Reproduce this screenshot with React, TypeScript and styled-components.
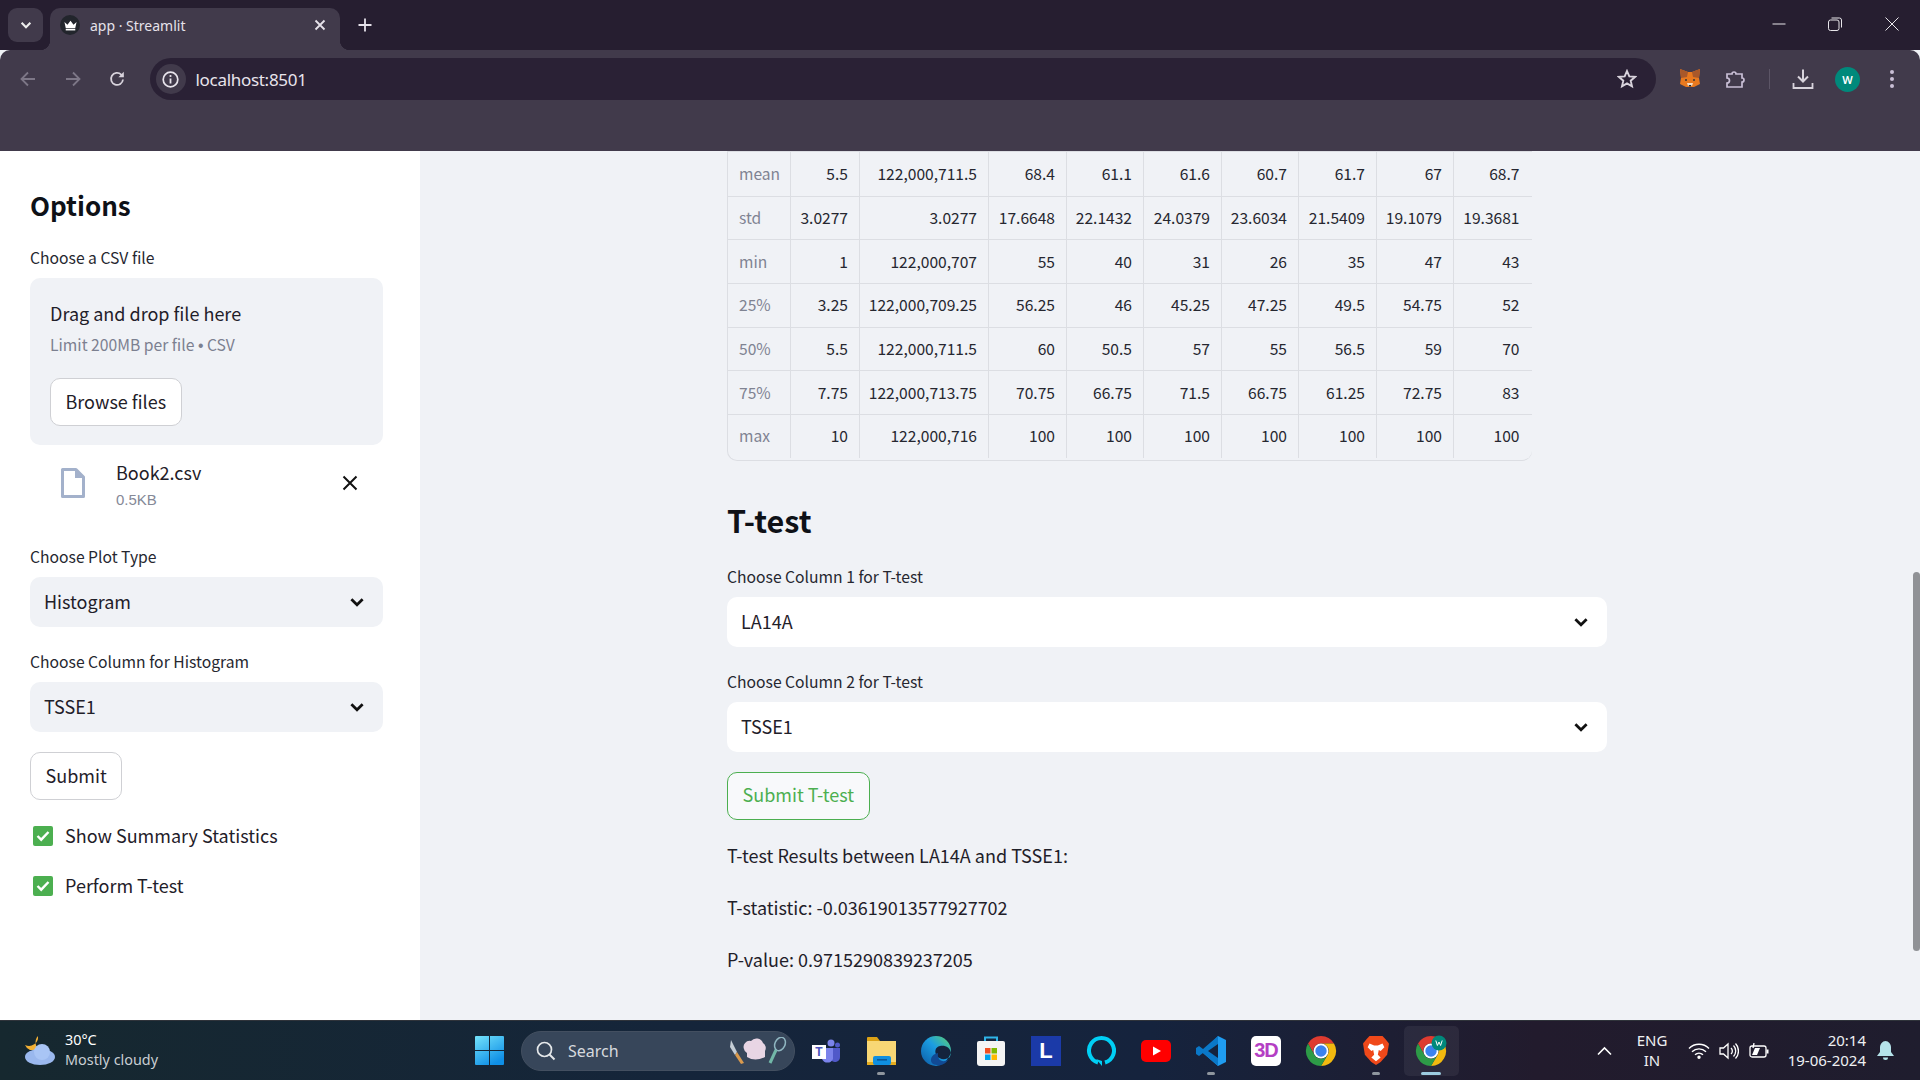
import React from 'react';
import styled, { createGlobalStyle } from 'styled-components';

const appFont = `"Noto Sans CJK SC", "Noto Sans", sans-serif`;
const chromeFont = `"Noto Sans", "Open Sans", sans-serif`;

const GlobalStyle = createGlobalStyle`
  html, body {
    margin: 0;
    padding: 0;
    height: 100%;
    overflow: hidden;
    background: #f0f2f6;
  }
  * { box-sizing: border-box; }
`;

const Shell = styled.div`
  width: 1920px;
  height: 1080px;
  display: flex;
  flex-direction: column;
  overflow: hidden;
  position: relative;
`;

/* browser chrome */
const TabStrip = styled.div`
  height: 50px;
  flex: none;
  background: #261e30;
  display: flex;
  align-items: flex-end;
  padding-left: 8px;
  font-family: ${chromeFont};
`;

const TabMenu = styled.div`
  width: 35px;
  height: 34px;
  margin: 0 7px 8px 0;
  background: #413a4b;
  border-radius: 9px;
  display: flex;
  align-items: center;
  justify-content: center;
`;

const Tab = styled.div`
  width: 290px;
  height: 42px;
  background: #413a4b;
  border-radius: 10px 10px 0 0;
  display: flex;
  align-items: center;
  padding: 0 14px 8px 10px;
  color: #e6e2ea;
  font-size: 14px;
  position: relative;
  &::before, &::after {
    content: '';
    position: absolute;
    bottom: 0;
    width: 10px;
    height: 10px;
  }
  &::before {
    left: -10px;
    background: radial-gradient(circle at 0 0, #261e30 10px, #413a4b 10.5px);
  }
  &::after {
    right: -10px;
    background: radial-gradient(circle at 100% 0, #261e30 10px, #413a4b 10.5px);
  }
`;

const Favicon = styled.div`
  width: 20px;
  height: 20px;
  border-radius: 50%;
  background: #22252c;
  display: flex;
  align-items: center;
  justify-content: center;
  margin-right: 10px;
`;

const TabTitle = styled.span`
  flex: 1;
`;

const NewTab = styled.div`
  width: 30px;
  height: 30px;
  margin: 0 0 10px 10px;
  display: flex;
  align-items: center;
  justify-content: center;
`;

const WindowControls = styled.div`
  margin-left: auto;
  height: 50px;
  display: flex;
  align-items: center;
  padding-bottom: 2px;
`;

const WindowButton = styled.div`
  width: 56.5px;
  display: flex;
  justify-content: center;
`;

const Toolbar = styled.div`
  height: 101px;
  flex: none;
  background: #413a4b;
  border-radius: 10px 10px 0 0;
  display: flex;
  align-items: flex-start;
  padding: 8px 0 0 10px;
  font-family: ${chromeFont};
`;

const NavButton = styled.div`
  width: 36px;
  height: 42px;
  margin-right: 8.5px;
  display: flex;
  align-items: center;
  justify-content: center;
`;

const AddressBar = styled.div`
  width: 1506px;
  height: 42px;
  margin-left: 6px;
  border-radius: 21px;
  background: #2a2135;
  display: flex;
  align-items: center;
  padding: 0 19px 0 6px;
  color: #e8e4ec;
`;

const InfoBadge = styled.div`
  width: 30px;
  height: 30px;
  border-radius: 50%;
  background: #413a4b;
  display: flex;
  align-items: center;
  justify-content: center;
  margin-right: 10px;
`;

const Url = styled.span`
  flex: 1;
  font-size: 17px;
  letter-spacing: -0.3px;
`;

const ToolIcons = styled.div`
  display: flex;
  align-items: center;
  height: 42px;
`;

const ToolIcon = styled.div<{ $w: number }>`
  width: ${(p) => p.$w}px;
  display: flex;
  justify-content: center;
  align-items: center;
`;

const ToolDivider = styled.div`
  width: 1px;
  height: 20px;
  background: #5c5566;
  margin: 0 13px 0 21px;
`;

const Avatar = styled.div`
  width: 25px;
  height: 25px;
  border-radius: 50%;
  background: #00897b;
  color: #fff;
  font-size: 11px;
  font-weight: 600;
  display: flex;
  align-items: center;
  justify-content: center;
`;

/* streamlit page */
const Page = styled.div`
  flex: 1;
  min-height: 0;
  display: flex;
  font-family: ${appFont};
  color: #1f2029;
`;

const Sidebar = styled.aside`
  width: 420px;
  flex: none;
  background: #fff;
  padding: 35px 37px 0 30px;
`;

const SideTitle = styled.h2`
  margin: 0 0 23px;
  font-size: 26px;
  line-height: 38px;
  font-weight: 600;
  color: #0e1117;
`;

const Field = styled.div<{ $gap?: number }>`
  margin-bottom: ${(p) => p.$gap ?? 24}px;
`;

const Label = styled.div`
  font-size: 15.7px;
  line-height: 22px;
  margin-bottom: 9px;
  color: #262730;
`;

const Uploader = styled.div`
  height: 167px;
  background: #f0f2f6;
  border-radius: 10px;
  padding: 20px;
`;

const DropTitle = styled.div`
  font-size: 18px;
  line-height: 30px;
`;

const DropHint = styled.div`
  margin: 6px 0 21px;
  font-size: 15.7px;
  line-height: 22px;
  color: #7c8090;
`;

const Dot = styled.span`
  font-family: "Liberation Sans", sans-serif;
`;

const Button = styled.div<{ $accent?: boolean }>`
  display: inline-flex;
  align-items: center;
  height: 48px;
  padding: 0 14.5px 3px;
  font-size: 18px;
  border-radius: 10px;
  background: ${(p) => (p.$accent ? '#f8f9fb' : '#fff')};
  border: 1px solid ${(p) => (p.$accent ? '#4caf50' : '#cfd0d4')};
  color: ${(p) => (p.$accent ? '#4caf50' : '#1f2029')};
`;

const FileRow = styled.div`
  height: 50px;
  margin: 13px 0 38px;
  padding: 0 25px 0 31px;
  display: flex;
  align-items: center;
`;

const FileInfo = styled.div`
  flex: 1;
  margin: 5px 0 0 31px;
`;

const FileName = styled.div`
  font-size: 18px;
  line-height: 27px;
`;

const FileSize = styled.div`
  font-family: "Liberation Sans", sans-serif;
  font-size: 15px;
  line-height: 27px;
  color: #858997;
`;

const Select = styled.div<{ $light?: boolean }>`
  height: 50px;
  border-radius: 10px;
  background: ${(p) => (p.$light ? '#fff' : '#f0f2f6')};
  padding: 0 17px 0 14px;
  display: flex;
  align-items: center;
  justify-content: space-between;
  font-size: 18px;
`;

const SelectValue = styled.span`
  padding-bottom: 2px;
`;

const CheckRow = styled.div`
  height: 28px;
  margin-top: 22px;
  padding-left: 3px;
  display: flex;
  align-items: center;
  gap: 12px;
  font-size: 18px;
`;

const CheckText = styled.span`
  padding-bottom: 2px;
`;

const CheckBox = styled.div`
  width: 20px;
  height: 20px;
  border-radius: 2px;
  background: #4caf50;
  display: flex;
  align-items: center;
  justify-content: center;
`;

const Main = styled.main`
  flex: 1;
  padding-left: 307px;
  background: #f0f2f6;
`;

const StatsTable = styled.div`
  width: 805px;
  border-left: 1px solid #dcdee3;
  border-bottom: 1px solid #dcdee3;
  border-top: 1px solid #dcdee3;
  border-radius: 0 0 10px 10px;
  overflow: hidden;
  padding-bottom: 2px;
  font-size: 15.6px;
`;

const StatsRow = styled.div`
  display: grid;
  grid-template-columns: 63px 69px 129px 78px 77px 78px 77px 78px 77px 78px;
  height: 43.7px;
  & + & { border-top: 1.5px solid #dcdee3; }
`;

const Cell = styled.div<{ $head?: boolean }>`
  display: flex;
  align-items: center;
  justify-content: ${(p) => (p.$head ? 'flex-start' : 'flex-end')};
  padding: 0 ${(p) => (p.$head ? '0' : '11px')} 2px 11px;
  color: ${(p) => (p.$head ? '#7f8392' : '#262730')};
  border-right: 1px solid #dcdee3;
  &:last-child {
    border-right: none;
    padding-right: 12.5px;
  }
`;

const SectionTitle = styled.h2`
  margin: 37px 0 24px;
  font-size: 30.5px;
  line-height: 44px;
  font-weight: 600;
  color: #0e1117;
`;

const MainField = styled(Field)`
  width: 880px;
`;

const Result = styled.p`
  margin: 27px 0 0;
  font-size: 18px;
  line-height: 25px;
  &:first-of-type { margin-top: 23px; }
`;

const ScrollThumb = styled.div`
  position: absolute;
  right: 0;
  top: 572px;
  width: 7px;
  height: 379px;
  background: #909296;
  border-radius: 4px;
`;

/* windows taskbar */
const Taskbar = styled.footer`
  height: 60px;
  flex: none;
  border-top: 1px solid #2f333a;
  background: linear-gradient(90deg, #16282f 0%, #15253a 35%, #15233d 60%, #221b2d 80%, #1f1d2e 100%);
  display: flex;
  align-items: center;
  color: #eef0f2;
  font-family: ${chromeFont};
  font-size: 14.4px;
`;

const Weather = styled.div`
  width: 475px;
  flex: none;
  padding-left: 24px;
  display: flex;
  align-items: center;
  gap: 9px;
`;

const TwoLines = styled.div<{ $align?: string }>`
  line-height: 20px;
  padding-bottom: 2px;
  text-align: ${(p) => p.$align ?? 'left'};
`;

const WeatherTemp = styled.div`
  color: #fff;
`;

const WeatherText = styled.div`
  color: #c9ced3;
`;

const SearchPill = styled.div`
  width: 274px;
  height: 40px;
  margin: 0 3.5px 0 17px;
  border-radius: 20px;
  background: #37465a;
  border: 1px solid #434f60;
  display: flex;
  align-items: center;
  padding: 0 5px 0 14px;
  font-size: 16px;
  color: #d6dade;
`;

const SearchLabel = styled.span`
  flex: 1;
  margin-left: 12px;
`;

const Pinned = styled.div<{ $active?: boolean; $open?: boolean }>`
  width: 55px;
  height: 50px;
  display: flex;
  align-items: center;
  justify-content: center;
  position: relative;
  border-radius: 5px;
  background: ${(p) => (p.$active ? 'rgba(255,255,255,0.06)' : 'transparent')};
  &::after {
    content: '';
    display: ${(p) => (p.$open || p.$active ? 'block' : 'none')};
    position: absolute;
    bottom: 1px;
    left: 50%;
    transform: translateX(-50%);
    width: ${(p) => (p.$active ? 20 : 8)}px;
    height: 3px;
    border-radius: 2px;
    background: ${(p) => (p.$active ? '#9ccbe0' : '#8f969e')};
  }
`;

const AppTile = styled.div<{ $bg: string }>`
  width: 30px;
  height: 30px;
  background: ${(p) => p.$bg};
  display: flex;
  align-items: center;
  justify-content: center;
`;

const LetterL = styled.span`
  color: #fff;
  font-family: "Liberation Sans", sans-serif;
  font-weight: 700;
  font-size: 22px;
`;

const ThreeD = styled.div`
  width: 30px;
  height: 30px;
  border-radius: 5px;
  background: #fff;
  display: flex;
  align-items: center;
  justify-content: center;
  font-family: "Liberation Sans", sans-serif;
  font-weight: 700;
  font-size: 20px;
  letter-spacing: -1px;
  color: #b43fc4;
`;

const Tray = styled.div`
  margin-left: auto;
  display: flex;
  align-items: center;
  padding-right: 16px;
`;

const TrayIcon = styled.div<{ $w: number }>`
  width: ${(p) => p.$w}px;
  display: flex;
  justify-content: center;
`;

const TrayLang = styled(TwoLines)`
  width: 50px;
  margin: 0 9px 0 13px;
  font-size: 15px;
`;

const Clock = styled(TwoLines)`
  width: 94px;
  font-size: 15px;
`;

/* drawn icons */
const Chevron = ({ size = 18, color = '#111' }: { size?: number; color?: string }) => (
  <svg width={size} height={size} viewBox="0 0 16 16" fill="none">
    <path d="M3 5.5 8 10.5 13 5.5" stroke={color} strokeWidth="2.4" />
  </svg>
);

const Crown = () => (
  <svg width="13" height="11" viewBox="0 0 15 12">
    <path d="M0.5 2 4 5 7.5 0.5 11 5 14.5 2 13 9H2Z" fill="#fff" />
    <rect x="2" y="9.7" width="11" height="2" fill="#fff" />
  </svg>
);

const FoxIcon = () => (
  <svg width="20" height="20" viewBox="0 0 20 20">
    <path d="M0 0 8 3H12L20 0 19 9 20 15 14 18H6L0 15 1 9Z" fill="#e8791f" />
    <path d="M0 0 8 3 7 8 1 9ZM20 0 12 3 13 8 19 9Z" fill="#a8582a" />
    <path d="M7 14H13L12 17H8Z" fill="#f3dcc5" />
    <path d="M8.5 16H11.5L10 18Z" fill="#222" />
    <circle cx="6" cy="11" r="1" fill="#333" />
    <circle cx="14" cy="11" r="1" fill="#333" />
  </svg>
);

const ChromeLogo = ({ badge }: { badge?: boolean }) => (
  <svg width="32" height="32" viewBox="0 0 32 32">
    <path d="M16 1A15 15 0 0 1 29 8.5H16A7.5 7.5 0 0 0 9.5 20L3 8.5A15 15 0 0 1 16 1Z" fill="#de3b30" />
    <path d="M29 8.5A15 15 0 0 1 16 31L22.5 20A7.5 7.5 0 0 0 16 8.5Z" fill="#f2b90f" />
    <path d="M16 31A15 15 0 0 1 3 8.5L9.5 20A7.5 7.5 0 0 0 22.5 20Z" fill="#2d9b47" />
    <circle cx="16" cy="16" r="7.5" fill="#fff" />
    <circle cx="16" cy="16" r="5.7" fill="#3b82ee" />
    {badge && (
      <>
        <circle cx="24" cy="8" r="7.5" fill="#00897b" />
        <path d="M20.8 5.5 22.4 10.5 24 7 25.6 10.5 27.2 5.5" fill="none" stroke="#fff" strokeWidth="1" />
      </>
    )}
  </svg>
);

const CheckMark = () => (
  <CheckBox>
    <svg width="14" height="12" viewBox="0 0 14 12" fill="none">
      <path d="M1.5 6 5.2 9.7 12.5 2" stroke="#fff" strokeWidth="2.4" />
    </svg>
  </CheckBox>
);

const statsRows = [
  ['mean', '5.5', '122,000,711.5', '68.4', '61.1', '61.6', '60.7', '61.7', '67', '68.7'],
  ['std', '3.0277', '3.0277', '17.6648', '22.1432', '24.0379', '23.6034', '21.5409', '19.1079', '19.3681'],
  ['min', '1', '122,000,707', '55', '40', '31', '26', '35', '47', '43'],
  ['25%', '3.25', '122,000,709.25', '56.25', '46', '45.25', '47.25', '49.5', '54.75', '52'],
  ['50%', '5.5', '122,000,711.5', '60', '50.5', '57', '55', '56.5', '59', '70'],
  ['75%', '7.75', '122,000,713.75', '70.75', '66.75', '71.5', '66.75', '61.25', '72.75', '83'],
  ['max', '10', '122,000,716', '100', '100', '100', '100', '100', '100', '100'],
];

const App = () => (
  <Shell>
    <GlobalStyle />
    <TabStrip>
      <TabMenu><Chevron size={14} color="#eee" /></TabMenu>
      <Tab>
        <Favicon><Crown /></Favicon>
        <TabTitle>app · Streamlit</TabTitle>
        <svg width="12" height="12" viewBox="0 0 12 12">
          <path d="M1.5 1.5 10.5 10.5M10.5 1.5 1.5 10.5" stroke="#e6e2ea" strokeWidth="1.8" />
        </svg>
      </Tab>
      <NewTab>
        <svg width="14" height="14" viewBox="0 0 14 14">
          <path d="M7 0.5V13.5M0.5 7H13.5" stroke="#e6e2ea" strokeWidth="1.8" />
        </svg>
      </NewTab>
      <WindowControls>
        <WindowButton>
          <svg width="14" height="14" viewBox="0 0 14 14"><path d="M0.5 7H13.5" stroke="#e8e6ea" /></svg>
        </WindowButton>
        <WindowButton>
          <svg width="14" height="14" viewBox="0 0 14 14" fill="none">
            <rect x="0.5" y="3" width="10.5" height="10.5" rx="2" stroke="#e8e6ea" />
            <path d="M3.5 1H11.5A2 2 0 0 1 13.5 3V10.5" stroke="#e8e6ea" />
          </svg>
        </WindowButton>
        <WindowButton>
          <svg width="14" height="14" viewBox="0 0 14 14"><path d="M0.5 0.5 13.5 13.5M13.5 0.5 0.5 13.5" stroke="#e8e6ea" /></svg>
        </WindowButton>
      </WindowControls>
    </TabStrip>

    <Toolbar>
      <NavButton>
        <svg width="18" height="18" viewBox="0 0 18 18" fill="none">
          <path d="M16 9H2.5M9 2.5 2.5 9 9 15.5" stroke="#7d7787" strokeWidth="1.8" />
        </svg>
      </NavButton>
      <NavButton>
        <svg width="18" height="18" viewBox="0 0 18 18" fill="none">
          <path d="M2 9H15.5M9 2.5 15.5 9 9 15.5" stroke="#7d7787" strokeWidth="1.8" />
        </svg>
      </NavButton>
      <NavButton>
        <svg width="18" height="18" viewBox="0 0 18 18" fill="none">
          <path d="M15 9.5A6 6 0 1 1 13.2 4.6L15 6.5" stroke="#d8d3dc" strokeWidth="1.8" />
          <path d="M15.8 1.8V7.2H10.4Z" fill="#d8d3dc" />
        </svg>
      </NavButton>
      <AddressBar>
        <InfoBadge>
          <svg width="17" height="17" viewBox="0 0 17 17" fill="none">
            <circle cx="8.5" cy="8.5" r="7.3" stroke="#e8e4ec" strokeWidth="1.7" />
            <path d="M8.5 7.5V12.5" stroke="#e8e4ec" strokeWidth="1.8" />
            <circle cx="8.5" cy="5" r="1.1" fill="#e8e4ec" />
          </svg>
        </InfoBadge>
        <Url>localhost:8501</Url>
        <svg width="20" height="20" viewBox="0 0 20 20" fill="none">
          <path d="M10 2 12.3 7.4 18 7.9 13.7 11.7 15 17.4 10 14.4 5 17.4 6.3 11.7 2 7.9 7.7 7.4Z" stroke="#d8d3dc" strokeWidth="1.9" />
        </svg>
      </AddressBar>
      <ToolIcons>
        <ToolIcon $w={68}><FoxIcon /></ToolIcon>
        <ToolIcon $w={24}>
          <svg width="20" height="20" viewBox="0 0 20 20" fill="none">
            <path d="M1 5H6A2 2 0 0 1 10 5H16V9A2 2 0 0 1 16 13V18H1V14A2.5 2.5 0 0 0 1 9Z" stroke="#c9bfd6" strokeWidth="1.7" />
          </svg>
        </ToolIcon>
        <ToolDivider />
        <ToolIcon $w={40}>
          <svg width="22" height="22" viewBox="0 0 22 22" fill="none">
            <path d="M11 1.5V13M6 8.5 11 13.5 16 8.5" stroke="#d8d3dc" strokeWidth="2" />
            <path d="M1.5 15V20H20.5V15" stroke="#d8d3dc" strokeWidth="1.8" />
          </svg>
        </ToolIcon>
        <ToolIcon $w={50}><Avatar>W</Avatar></ToolIcon>
        <ToolIcon $w={38}>
          <svg width="6" height="20" viewBox="0 0 6 20">
            <circle cx="3" cy="3" r="2" fill="#c9bfd6" />
            <circle cx="3" cy="10" r="2" fill="#c9bfd6" />
            <circle cx="3" cy="17" r="2" fill="#c9bfd6" />
          </svg>
        </ToolIcon>
      </ToolIcons>
    </Toolbar>

    <Page>
      <Sidebar>
        <SideTitle>Options</SideTitle>
        <Label>Choose a CSV file</Label>
        <Uploader>
          <DropTitle>Drag and drop file here</DropTitle>
          <DropHint>Limit 200MB per file <Dot>•</Dot> CSV</DropHint>
          <Button>Browse files</Button>
        </Uploader>
        <FileRow>
          <svg width="24" height="30" viewBox="0 0 24 30" fill="none">
            <path d="M1.5 1.5H15L22.5 9V28.5H1.5Z" stroke="#a3b1cb" strokeWidth="3" strokeLinejoin="round" />
            <path d="M14 1.5V10H22.5Z" fill="#a3b1cb" />
          </svg>
          <FileInfo>
            <FileName>Book2.csv</FileName>
            <FileSize>0.5KB</FileSize>
          </FileInfo>
          <svg width="16" height="16" viewBox="0 0 16 16">
            <path d="M1.5 1.5 14.5 14.5M14.5 1.5 1.5 14.5" stroke="#111" strokeWidth="2" />
          </svg>
        </FileRow>
        <Field>
          <Label>Choose Plot Type</Label>
          <Select><SelectValue>Histogram</SelectValue><Chevron /></Select>
        </Field>
        <Field $gap={20}>
          <Label>Choose Column for Histogram</Label>
          <Select><SelectValue>TSSE1</SelectValue><Chevron /></Select>
        </Field>
        <Button>Submit</Button>
        <CheckRow>
          <CheckMark />
          <CheckText>Show Summary Statistics</CheckText>
        </CheckRow>
        <CheckRow>
          <CheckMark />
          <CheckText>Perform T-test</CheckText>
        </CheckRow>
      </Sidebar>

      <Main>
        <StatsTable>
          {statsRows.map((row) => (
            <StatsRow key={row[0]}>
              {row.map((value, i) => (
                <Cell key={i} $head={i === 0}>{value}</Cell>
              ))}
            </StatsRow>
          ))}
        </StatsTable>
        <SectionTitle>T-test</SectionTitle>
        <MainField>
          <Label>Choose Column 1 for T-test</Label>
          <Select $light><SelectValue>LA14A</SelectValue><Chevron /></Select>
        </MainField>
        <MainField $gap={20}>
          <Label>Choose Column 2 for T-test</Label>
          <Select $light><SelectValue>TSSE1</SelectValue><Chevron /></Select>
        </MainField>
        <Button $accent>Submit T-test</Button>
        <Result>T-test Results between LA14A and TSSE1:</Result>
        <Result>T-statistic: -0.03619013577927702</Result>
        <Result>P-value: 0.9715290839237205</Result>
      </Main>
    </Page>
    <ScrollThumb />

    <Taskbar>
      <Weather>
        <svg width="32" height="30" viewBox="0 0 32 30">
          <path d="M14 0A9 9 0 0 0 16 14L6 14A9 9 0 0 1 1 9 9 9 0 0 0 14 0Z" fill="#f2b035" />
          <ellipse cx="16" cy="21" rx="15" ry="8" fill="#9ab8ee" />
          <circle cx="18" cy="16" r="8" fill="#a9c5f5" />
        </svg>
        <TwoLines>
          <WeatherTemp>30°C</WeatherTemp>
          <WeatherText>Mostly cloudy</WeatherText>
        </TwoLines>
      </Weather>
      <svg width="29" height="29" viewBox="0 0 29 29">
        <defs>
          <linearGradient id="winGrad" x1="0" y1="0" x2="0.6" y2="1">
            <stop offset="0" stopColor="#74e3fb" />
            <stop offset="1" stopColor="#0f8fe6" />
          </linearGradient>
        </defs>
        <path d="M1 0H14V14H0V1A1 1 0 0 1 1 0ZM15 0H28A1 1 0 0 1 29 1V14H15ZM0 15H14V29H1A1 1 0 0 1 0 28ZM15 15H29V28A1 1 0 0 1 28 29H15Z" fill="url(#winGrad)" />
      </svg>
      <SearchPill>
        <svg width="20" height="20" viewBox="0 0 20 20" fill="none">
          <circle cx="8.5" cy="8.5" r="7" stroke="#e5e8ea" strokeWidth="1.7" />
          <path d="M13.5 13.5 18.5 18.5" stroke="#e5e8ea" strokeWidth="2" />
        </svg>
        <SearchLabel>Search</SearchLabel>
        <svg width="60" height="28" viewBox="0 0 60 28">
          <path d="M2 3 L8 15 L6 18 L1 10Z" fill="#c6ced6" />
          <path d="M6 18 L8 15 L15 26 L12 27Z" fill="#d99a4e" />
          <path d="M15 12A6 6 0 0 1 22 4 7 7 0 0 1 34 6 6 6 0 0 1 36 14V20Q26 25 18 20V16A5 5 0 0 1 15 12Z" fill="#e8d5e4" />
          <ellipse cx="51" cy="7" rx="5" ry="7" fill="none" stroke="#8fb5c0" strokeWidth="1.5" transform="rotate(25 51 7)" />
          <path d="M47 13 41 26" stroke="#72b8a8" strokeWidth="3" />
        </svg>
      </SearchPill>

      <Pinned>
        <svg width="30" height="30" viewBox="0 0 30 30">
          <circle cx="20" cy="7" r="3.5" fill="#7b83eb" />
          <circle cx="26.5" cy="9" r="2.5" fill="#5059c9" />
          <path d="M16 12H29V21A5 5 0 0 1 20 24Z" fill="#5059c9" />
          <path d="M11 12H22V23A6 6 0 0 1 11 23Z" fill="#7b83eb" />
          <rect x="1" y="9" width="14" height="14" fill="#fff" />
          <text x="8" y="20" textAnchor="middle" fontSize="12" fontWeight="700" fontFamily="Liberation Sans" fill="#4b53bc">T</text>
        </svg>
      </Pinned>
      <Pinned $open>
        <svg width="30" height="30" viewBox="0 0 30 30">
          <path d="M1 2A1 1 0 0 1 2 1H11L14 5H1Z" fill="#dca216" />
          <rect x="1" y="5" width="29" height="24" fill="#f8d775" />
          <rect x="1" y="26" width="29" height="3" fill="#e5ac1e" />
          <rect x="7" y="20" width="18" height="9" rx="2" fill="#0f8fe0" />
          <rect x="11" y="23" width="10" height="1.6" fill="#0b5a99" />
        </svg>
      </Pinned>
      <Pinned>
        <svg width="30" height="30" viewBox="0 0 30 30">
          <defs>
            <linearGradient id="edgeGrad" x1="0" y1="1" x2="1" y2="0">
              <stop offset="0" stopColor="#0c59a4" />
              <stop offset="0.55" stopColor="#1b9de2" />
              <stop offset="1" stopColor="#5fd36d" />
            </linearGradient>
          </defs>
          <circle cx="15" cy="15" r="15" fill="url(#edgeGrad)" />
          <path d="M30 17C29 11 24 9 19 10 14 11 13 16 16 20 19 24 25 24 29 21 26 28 20 30 15 30 18 30 25 28 30 17Z" fill="#14233d" />
          <path d="M17 17C16 24 21 27 27 24 23 30 16 30 12 28 8 25 10 18 17 17Z" fill="#114a94" />
        </svg>
      </Pinned>
      <Pinned>
        <svg width="30" height="30" viewBox="0 0 30 30">
          <path d="M9 6V1.5H21V6" fill="none" stroke="#2fb4e8" strokeWidth="2" />
          <path d="M1 7A2 2 0 0 1 3 5H27A2 2 0 0 1 29 7V27A3 3 0 0 1 26 30H4A3 3 0 0 1 1 27Z" fill="#f4f4f4" />
          <rect x="9" y="12" width="5.5" height="5.5" fill="#f25022" />
          <rect x="15.5" y="12" width="5.5" height="5.5" fill="#7fba00" />
          <rect x="9" y="18.5" width="5.5" height="5.5" fill="#00a4ef" />
          <rect x="15.5" y="18.5" width="5.5" height="5.5" fill="#ffb900" />
        </svg>
      </Pinned>
      <Pinned>
        <AppTile $bg="#1b3aa8"><LetterL>L</LetterL></AppTile>
      </Pinned>
      <Pinned>
        <svg width="30" height="30" viewBox="0 0 30 30" fill="none">
          <path d="M12 26.5A12.5 12.5 0 1 1 19 26.5" stroke="#00cff5" strokeWidth="4" />
          <path d="M10 23 16 30V25Z" fill="#00cff5" />
        </svg>
      </Pinned>
      <Pinned>
        <svg width="30" height="22" viewBox="0 0 30 22">
          <rect width="30" height="22" rx="5" fill="#f00" />
          <path d="M12 6.5 20 11 12 15.5Z" fill="#fff" />
        </svg>
      </Pinned>
      <Pinned $open>
        <svg width="30" height="30" viewBox="0 0 30 30">
          <path d="M22 0 30 4V26L22 30 7 17Z" fill="#1f9cf0" />
          <path d="M22 0V30L7 17 3 20 0 18V12L3 10 7 13Z" fill="#0a78c8" />
          <path d="M22 8V22L12 15Z" fill="#14233d" />
        </svg>
      </Pinned>
      <Pinned>
        <ThreeD>3D</ThreeD>
      </Pinned>
      <Pinned><ChromeLogo /></Pinned>
      <Pinned $open>
        <svg width="26" height="31" viewBox="0 0 28 31">
          <path d="M7 0H21L24 3 28 8 26 20 19 28 14 31 9 28 2 20 0 8 4 3Z" fill="#f0491a" />
          <path d="M7 8 12 10H16L21 8 23 12 19 16 17 15 16 20 19 23 14 27 9 23 12 20 11 15 9 16 5 12Z" fill="#fff" />
        </svg>
      </Pinned>
      <Pinned $active><ChromeLogo badge /></Pinned>

      <Tray>
        <TrayIcon $w={20}>
          <svg width="15" height="10" viewBox="0 0 15 10" fill="none">
            <path d="M1 8.5 7.5 2 14 8.5" stroke="#fff" strokeWidth="1.6" />
          </svg>
        </TrayIcon>
        <TrayLang $align="center">ENG<br />IN</TrayLang>
        <TrayIcon $w={26}>
          <svg width="22" height="16" viewBox="0 0 22 16" fill="none" stroke="#fff" strokeWidth="1.4">
            <path d="M1 5.5A14 14 0 0 1 21 5.5M4 8.7A10 10 0 0 1 18 8.7M7 11.7A6 6 0 0 1 15 11.7" />
            <circle cx="11" cy="14.3" r="1" fill="#fff" />
          </svg>
        </TrayIcon>
        <TrayIcon $w={34}>
          <svg width="20" height="18" viewBox="0 0 20 18" fill="none" stroke="#fff" strokeWidth="1.3">
            <path d="M1 6H4.5L9 2V16L4.5 12H1Z" />
            <path d="M12 6A4 4 0 0 1 12 12M14.5 3.5A8 8 0 0 1 14.5 14.5M16.5 1.5A11 11 0 0 1 16.5 16.5" />
          </svg>
        </TrayIcon>
        <TrayIcon $w={26}>
          <svg width="20" height="16" viewBox="0 0 20 16" fill="none">
            <rect x="1" y="3" width="16" height="11" rx="2" stroke="#fff" strokeWidth="1.3" />
            <rect x="17.5" y="6.5" width="2" height="4" fill="#fff" />
            <path d="M3 12H8L11 5H6Z" fill="#fff" />
            <path d="M5 0 4 5" stroke="#fff" strokeWidth="1.3" />
          </svg>
        </TrayIcon>
        <Clock $align="right">20:14<br />19-06-2024</Clock>
        <TrayIcon $w={38}>
          <svg width="17" height="20" viewBox="0 0 17 20">
            <path d="M8.5 0A6 6 0 0 1 14 6V11L17 15H0L3 11V6A6 6 0 0 1 8.5 0Z" fill="#b5e3ea" />
            <path d="M6 16.5H11A2.5 2.5 0 0 1 6 16.5Z" fill="#b5e3ea" />
          </svg>
        </TrayIcon>
      </Tray>
    </Taskbar>
  </Shell>
);

export default App;
